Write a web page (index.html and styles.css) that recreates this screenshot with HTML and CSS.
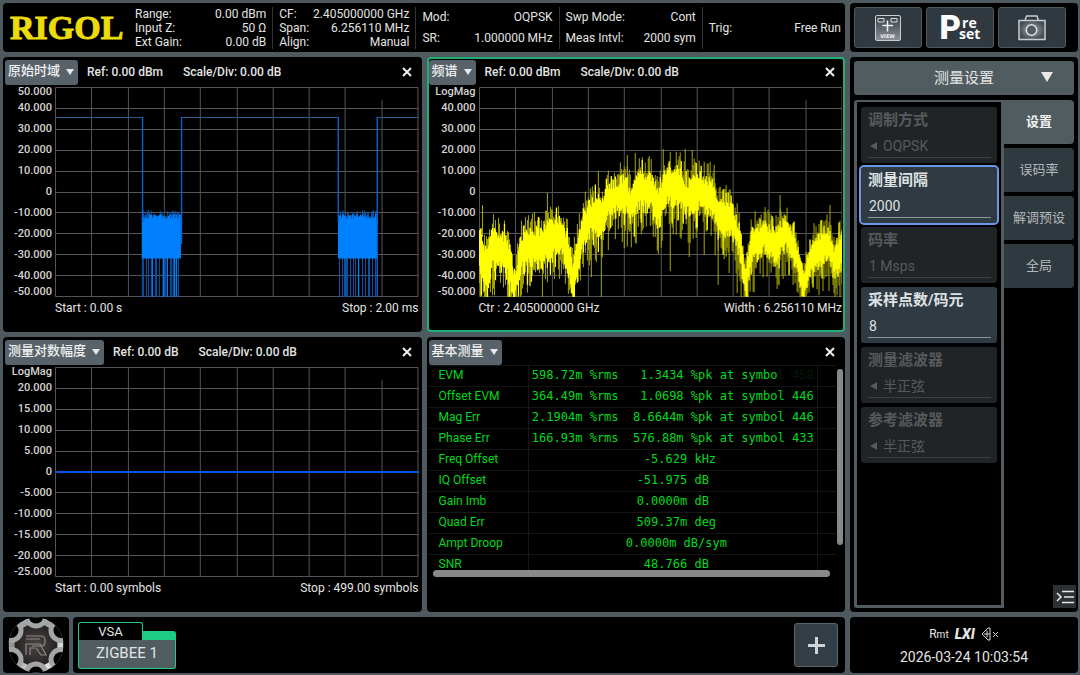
FILE: index.html
```html
<!DOCTYPE html>
<html lang="zh-CN">
<head>
<meta charset="utf-8">
<title>RIGOL VSA</title>
<link rel="stylesheet" href="styles.css">
</head>
<body>
<div class="screen">
  <header class="status">
    <div class="brand">RIGOL</div>
    <div class="cell">
      <div class="pair"><span>Range:</span><span>0.00 dBm</span></div>
      <div class="pair"><span>Input Z:</span><span>50 Ω</span></div>
      <div class="pair"><span>Ext Gain:</span><span>0.00 dB</span></div>
    </div>
    <div class="cell">
      <div class="pair"><span>CF:</span><span>2.405000000 GHz</span></div>
      <div class="pair"><span>Span:</span><span>6.256110 MHz</span></div>
      <div class="pair"><span>Align:</span><span>Manual</span></div>
    </div>
    <div class="cell roomy">
      <div class="pair"><span>Mod:</span><span>OQPSK</span></div>
      <div class="pair"><span>SR:</span><span>1.000000 MHz</span></div>
    </div>
    <div class="cell roomy">
      <div class="pair"><span>Swp Mode:</span><span>Cont</span></div>
      <div class="pair"><span>Meas Intvl:</span><span>2000 sym</span></div>
    </div>
    <div class="cell">
      <div class="pair"><span>Trig:</span><span>Free Run</span></div>
    </div>
  </header>

  <nav class="tools" aria-label="工具">
    <button class="tool" type="button" aria-label="View">
      <svg width="26" height="26" viewBox="0 0 26 26" aria-hidden="true">
        <defs><linearGradient id="viewFill" x1="0" y1="0" x2="0" y2="1"><stop offset="0" stop-color="#343c43"/><stop offset="1" stop-color="#8b9096"/></linearGradient></defs>
        <rect x="0.5" y="0.5" width="25" height="25" rx="1.5" fill="url(#viewFill)" stroke="#c9cdd0"/>
        <path d="M3 3.500h6v3.500H3zM16 3.500h6v3.500h-6z" fill="none" stroke="#d8dbdd"/>
        <path d="M12.500 5.500v11M7.500 10.500h10.500" stroke="#f0f1f2" stroke-width="1.500"/>
        <text x="12.500" y="23" class="view-word">VIEW</text>
      </svg>
    </button>
    <button class="tool preset" type="button"><span class="preset-p">P</span><span class="preset-rest"><span>re</span><span>set</span></span></button>
    <button class="tool" type="button" aria-label="截图">
      <svg width="28" height="26" viewBox="0 0 28 26" aria-hidden="true">
        <defs><radialGradient id="camFill"><stop offset="0" stop-color="#a9adb1"/><stop offset="1" stop-color="#454d54"/></radialGradient></defs>
        <path d="M7 5.500 8.500 1h10.500l1.500 4.500" fill="none" stroke="#c9cdd0" stroke-width="1.500"/>
        <rect x="1" y="5.500" width="26" height="19" fill="url(#camFill)" stroke="#c9cdd0" stroke-width="1.500"/>
        <circle cx="13.500" cy="15" r="5.200" fill="#535a60" stroke="#dfe1e3" stroke-width="1.500"/>
      </svg>
    </button>
  </nav>

  <main class="windows">
    <section class="window">
      <div class="window-head">
        <button class="trace-pick" type="button">原始时域<span class="caret"></span></button>
        <span>Ref: 0.00 dBm</span><span>Scale/Div: 0.00 dB</span>
        <button class="close" type="button" aria-label="关闭"><svg width="10" height="10" viewBox="0 0 10 10"><path d="M1 1l8 8M9 1L1 9"/></svg></button>
      </div>
      <div class="chart">
        <div class="axis"><span>50.000</span><span>40.000</span><span>30.000</span><span>20.000</span><span>10.000</span><span>0</span><span>-10.000</span><span>-20.000</span><span>-30.000</span><span>-40.000</span><span>-50.000</span></div>
        <svg class="plot" data-trace="time" viewBox="0 0 364 210" preserveAspectRatio="none"></svg>
      </div>
      <div class="range"><span>Start : 0.00 s</span><span>Stop : 2.00 ms</span></div>
    </section>

    <section class="window active">
      <div class="window-head">
        <button class="trace-pick" type="button">频谱<span class="caret"></span></button>
        <span>Ref: 0.00 dBm</span><span>Scale/Div: 0.00 dB</span>
        <button class="close" type="button" aria-label="关闭"><svg width="10" height="10" viewBox="0 0 10 10"><path d="M1 1l8 8M9 1L1 9"/></svg></button>
      </div>
      <div class="chart">
        <div class="axis"><span>LogMag</span><span>40.000</span><span>30.000</span><span>20.000</span><span>10.000</span><span>0</span><span>-10.000</span><span>-20.000</span><span>-30.000</span><span>-40.000</span><span>-50.000</span></div>
        <svg class="plot" data-trace="spectrum" viewBox="0 0 364 210" preserveAspectRatio="none"></svg>
      </div>
      <div class="range"><span>Ctr : 2.405000000 GHz</span><span>Width : 6.256110 MHz</span></div>
    </section>

    <section class="window">
      <div class="window-head">
        <button class="trace-pick" type="button">测量对数幅度<span class="caret"></span></button>
        <span>Ref: 0.00 dB</span><span>Scale/Div: 0.00 dB</span>
        <button class="close" type="button" aria-label="关闭"><svg width="10" height="10" viewBox="0 0 10 10"><path d="M1 1l8 8M9 1L1 9"/></svg></button>
      </div>
      <div class="chart">
        <div class="axis"><span>LogMag</span><span>20.000</span><span>15.000</span><span>10.000</span><span>5.000</span><span>0</span><span>-5.000</span><span>-10.000</span><span>-15.000</span><span>-20.000</span><span>-25.000</span></div>
        <svg class="plot" data-trace="flat" viewBox="0 0 364 210" preserveAspectRatio="none"></svg>
      </div>
      <div class="range"><span>Start : 0.00 symbols</span><span>Stop : 499.00 symbols</span></div>
    </section>

    <section class="window">
      <div class="window-head short">
        <button class="trace-pick" type="button">基本测量<span class="caret"></span></button>
        <button class="close" type="button" aria-label="关闭"><svg width="10" height="10" viewBox="0 0 10 10"><path d="M1 1l8 8M9 1L1 9"/></svg></button>
      </div>
      <div class="results">
        <div class="results-view">
          <table class="metrics">
            <tbody>
              <tr><th scope="row">EVM</th><td>598.72m %rms   1.3434 %pk at symbo<span class="faded">l 458</span></td><td></td></tr>
              <tr><th scope="row">Offset EVM</th><td>364.49m %rms   1.0698 %pk at symbol 446</td><td></td></tr>
              <tr><th scope="row">Mag Err</th><td>2.1904m %rms  8.6644m %pk at symbol 446</td><td></td></tr>
              <tr><th scope="row">Phase Err</th><td>166.93m %rms  576.88m %pk at symbol 433</td><td></td></tr>
              <tr><th scope="row">Freq Offset</th><td>  -5.629 kHz</td><td></td></tr>
              <tr><th scope="row">IQ Offset</th><td>-51.975 dB</td><td></td></tr>
              <tr><th scope="row">Gain Imb</th><td>0.0000m dB</td><td></td></tr>
              <tr><th scope="row">Quad Err</th><td> 509.37m deg</td><td></td></tr>
              <tr><th scope="row">Ampt Droop</th><td> 0.0000m dB/sym</td><td></td></tr>
              <tr><th scope="row">SNR</th><td> 48.766 dB</td><td></td></tr>
            </tbody>
          </table>
        </div>
        <div class="bar-v"></div>
        <div class="bar-h"></div>
      </div>
    </section>
  </main>

  <aside class="menu">
    <button class="menu-title" type="button"><span>测量设置</span><span class="caret big"></span></button>
    <div class="menu-body">
      <form class="fields">
        <div class="field off"><label for="mod">调制方式</label><div class="value"><span class="back"></span><select id="mod" disabled><option>OQPSK</option></select></div></div>
        <div class="field on focus"><label for="interval">测量间隔</label><div class="value"><input id="interval" type="text" value="2000"></div></div>
        <div class="field off"><label for="rate">码率</label><div class="value"><input id="rate" type="text" value="1 Msps" disabled></div></div>
        <div class="field on"><label for="points">采样点数/码元</label><div class="value"><input id="points" type="text" value="8"></div></div>
        <div class="field off"><label for="mfilter">测量滤波器</label><div class="value"><span class="back"></span><select id="mfilter" disabled><option>半正弦</option></select></div></div>
        <div class="field off"><label for="rfilter">参考滤波器</label><div class="value"><span class="back"></span><select id="rfilter" disabled><option>半正弦</option></select></div></div>
      </form>
      <div class="tabs">
        <button class="tab current" type="button">设置</button>
        <button class="tab" type="button">误码率</button>
        <button class="tab" type="button">解调预设</button>
        <button class="tab" type="button">全局</button>
        <button class="collapse" type="button" aria-label="收起">
          <svg width="18" height="14" viewBox="0 0 18 14"><path d="M1 3l4 4-4 4M6 1.500h12M8 7h10M6 12.500h12"/></svg>
        </button>
      </div>
    </div>
  </aside>

  <footer class="dock">
    <button class="home" type="button" aria-label="主页">
      <svg width="56" height="56" viewBox="0 0 56 56" aria-hidden="true">
        <defs>
          <linearGradient id="metal" x1="0" y1="0" x2="1" y2="1"><stop offset="0" stop-color="#c9cacb"/><stop offset="0.300" stop-color="#8f9092"/><stop offset="0.550" stop-color="#b9babb"/><stop offset="0.800" stop-color="#e2e2e3"/><stop offset="1" stop-color="#88898b"/></linearGradient>
          <radialGradient id="core"><stop offset="0" stop-color="#4a4544"/><stop offset="1" stop-color="#262323"/></radialGradient>
          <clipPath id="disc"><circle cx="28" cy="28" r="27.500"/></clipPath>
        </defs>
        <g clip-path="url(#disc)">
          <circle cx="28" cy="28" r="27.500" fill="url(#metal)"/>
          <circle cx="28" cy="28" r="21.500" fill="url(#core)"/>
          <g fill="#a4a5a7"><circle cx="28" cy="-1" r="12.500"/><circle cx="53" cy="13.500" r="12.500"/><circle cx="53" cy="42.500" r="12.500"/><circle cx="28" cy="57" r="12.500"/><circle cx="3" cy="42.500" r="12.500"/><circle cx="3" cy="13.500" r="12.500"/></g>
          <g fill="#000"><circle cx="28" cy="-1" r="7.500"/><circle cx="53" cy="13.500" r="7.500"/><circle cx="53" cy="42.500" r="7.500"/><circle cx="28" cy="57" r="7.500"/><circle cx="3" cy="42.500" r="7.500"/><circle cx="3" cy="13.500" r="7.500"/></g>
        </g>
        <path d="M18 19h15q4 0 4 4v2q0 4-4 4h-9M18 22h14M18 38V27h14l6 11h-5l-5-7M22 38v-7h5" fill="none" stroke="#8d8987" stroke-width="1.200"/>
      </svg>
    </button>
    <div class="modes">
      <button class="mode" type="button"><span class="mode-kind">VSA</span><span class="mode-notch"></span><span class="mode-name">ZIGBEE 1</span></button>
      <button class="add" type="button" aria-label="添加"><svg width="17" height="17" viewBox="0 0 17 17"><path d="M8.500 0v17M0 8.500h17"/></svg></button>
    </div>
  </footer>

  <div class="clock">
    <div class="flags">
      <span class="rmt">R<small>mt</small></span>
      <span class="lxi">LXI</span>
      <svg width="18" height="14" viewBox="0 0 18 14" aria-hidden="true"><path d="M1 7l6-6h2v12H7zM3 7h6M6 3.500v7M12 5l5 5M17 5l-5 5"/></svg>
    </div>
    <time datetime="2026-03-24T10:03:54">2026-03-24 10:03:54</time>
  </div>
</div>
<script src="plots.js"></script>
</body>
</html>
```

FILE: styles.css
```css
* { box-sizing: border-box; }

body {
  margin: 0;
  background: #4e5a5f;
  color: #e4e4e4;
  font: 12px/14px Roboto, "Noto Sans CJK SC", sans-serif;
}

button, input, select {
  margin: 0;
  padding: 0;
  border: 0;
  background: none;
  color: inherit;
  font: inherit;
}

.screen {
  display: grid;
  grid-template: 49px minmax(0, 1fr) 56px / minmax(0, 1fr) 228px;
  column-gap: 5px;
  row-gap: 5px;
  height: 100vh;
  padding: 3px 2px 2px 3px;
}

.status, .tools, .window, .menu, .home, .modes, .clock {
  background: #000;
  border-radius: 4px;
}

/* Status strip */
.status {
  display: grid;
  grid-template-columns: 126px repeat(5, 1fr);
  align-items: center;
}

.brand {
  padding-left: 7px;
  color: #ecdc0c;
  font: bold 34px/46px "Liberation Serif", serif;
  -webkit-text-stroke: 1px #ecdc0c;
}

.cell {
  display: flex;
  flex-direction: column;
  justify-content: center;
  height: 42px;
  padding: 0 6px;
}

.cell + .cell { border-left: 1px solid #333; }
.cell:last-child { padding-right: 4px; }
.pair { display: flex; justify-content: space-between; white-space: nowrap; }
.roomy { line-height: 21px; }

/* Tool buttons */
.tools {
  display: grid;
  grid-template-columns: repeat(3, 1fr);
  gap: 4px;
  padding: 4px 12px 4px 4px;
}

.tool {
  display: flex;
  align-items: center;
  justify-content: center;
  border: 1px solid #50595f;
  border-radius: 3px;
  background: #303940;
}

.view-word { fill: #f0f1f2; font: bold 5px "DejaVu Sans", sans-serif; text-anchor: middle; }
.preset { color: #fff; }
.preset-p { font: 900 33px/34px Roboto, sans-serif; }
.preset-rest { display: grid; margin-left: -2px; font: bold 14px/11px "Open Sans", sans-serif; text-align: left; }
.preset-rest span:first-child { padding-left: 3px; }

/* Measurement windows */
.windows {
  display: grid;
  grid-template: repeat(2, minmax(0, 1fr)) / repeat(2, minmax(0, 1fr));
  gap: 5px;
}

.window {
  display: flex;
  flex-direction: column;
  min-height: 0;
  border: 2px solid #000;
}

.active { border-color: #1fae74; }

.window-head {
  display: flex;
  align-items: center;
  flex: none;
  gap: 20px;
  height: 28px;
  padding: 0 8px 2px 0;
  font-weight: 500;
}

.window-head.short { height: 26px; padding-bottom: 0; }

.trace-pick {
  display: flex;
  align-items: center;
  gap: 6px;
  height: 25px;
  margin-right: -11px;
  padding: 0 4px 2px 3px;
  border-radius: 3px;
  background: #57626a;
  color: #f0f0f0;
  font-size: 13px;
}

.caret {
  border: 4px solid transparent;
  border-top: 6px solid #e8e8e8;
  border-bottom: 0;
  margin-top: 2px;
}

.close { margin-left: auto; display: flex; }
.close path { stroke: #f0f0f0; stroke-width: 2; fill: none; }

.chart {
  display: grid;
  grid-template: minmax(0, 1fr) / 50px minmax(0, 1fr);
  flex: 1;
  min-height: 0;
  padding-right: 1px;
}

.axis {
  display: grid;
  grid-template-rows: minmax(0, 1fr) repeat(9, minmax(0, 2fr)) minmax(0, 1fr);
  align-items: center;
  padding-right: 3px;
  color: #d4d4d4;
  font-size: 11px;
  font-weight: 500;
  line-height: 10px;
  text-align: right;
}

.plot { display: block; width: 100%; height: 100%; overflow: hidden; }
.grid-line { stroke: #56565a; stroke-width: 1; fill: none; vector-effect: non-scaling-stroke; }
.time-level { stroke: #2a5b92; fill: none; }
.time-edge { stroke: #0a62cf; stroke-width: 1.4; fill: none; }
.time-dim { stroke: #0b58b0; fill: none; }
.time-core { stroke: #0080ff; stroke-width: 1.2; fill: none; }
.spec-dim { stroke: #a8a800; stroke-width: 1; fill: none; }
.spec-core { stroke: #ffff00; stroke-width: 1.3; fill: none; }
.flat-line { stroke: #0556e8; stroke-width: 2; fill: none; }

.range {
  display: flex;
  justify-content: space-between;
  flex: none;
  height: 33px;
  padding: 4px 1px 0 50px;
}

/* Result table */
.results {
  display: grid;
  grid-template: minmax(0, 1fr) 7px / minmax(0, 1fr) 6px;
  column-gap: 1px;
  flex: 1;
  min-height: 0;
  padding: 0 0 33px;
}

.results-view { overflow: hidden; }
.metrics { width: 100%; border-collapse: collapse; color: #00da1c; table-layout: fixed; }
.metrics tr { height: 21px; border-top: 1px solid #161616; }
.metrics th, .metrics td { padding: 0 0 2px; border-right: 1px solid #161616; }
.metrics th { width: 100px; padding-left: 10px; font-weight: 400; text-align: left; }
.metrics td { font: 12px/14px "DejaVu Sans Mono", monospace; text-align: center; white-space: pre; }
.metrics td:last-child { width: 19px; border: 0; }
.faded { color: #031a06; }
.bar-v { height: 176px; margin-top: 4px; border-radius: 3px; background: #888; }
.bar-h { margin: 0 6px 0 4px; border-radius: 4px; background: #888; }

/* Settings menu */
.menu {
  display: flex;
  flex-direction: column;
  gap: 5px;
  padding: 4px;
}

.menu-title {
  display: grid;
  grid-template-columns: 1fr auto 1fr;
  align-items: center;
  flex: none;
  height: 34px;
  border-radius: 3px;
  background: #505c60;
  font-size: 15px;
}

.menu-title span:first-child { grid-column: 2; }
.caret.big { justify-self: end; margin: 0 21px 2px 0; border-width: 10px 6px 0; }

.menu-body { display: flex; flex: 1; min-height: 0; }

.fields {
  display: flex;
  flex-direction: column;
  gap: 4px;
  flex: 1;
  min-width: 0;
  padding: 5px 4px 0;
  border: 3px solid #505c60;
  border-top-width: 2px;
  border-radius: 3px 0 0 3px;
}

.field {
  display: flex;
  flex-direction: column;
  height: 56px;
  padding: 4px 6px 5px 7px;
  border-radius: 3px;
}

.field label { font-size: 15px; line-height: 18px; font-weight: 700; }
.field.off { background: #212426; color: #565a5c; }
.field.on { background: #303a42; color: #dfe2e4; }
.field.focus { outline: 2px solid #6c97e8; }

.value {
  display: flex;
  align-items: center;
  flex: 1;
  padding-top: 5px;
  border-bottom: 1px solid currentColor;
  font-size: 14px;
}

.off .value { border-color: #3c4042; }
.on .value { border-color: #8d9499; }
.value input, .value select {
  flex: 1;
  min-width: 0;
  height: 22px;
  padding-left: 1px;
  opacity: 1;
  outline: none;
  appearance: none;
}

.back { margin: 0 5px 0 2px; border: 4px solid transparent; border-left: 0; border-right: 7px solid #565a5c; }

.tabs {
  display: flex;
  flex-direction: column;
  flex: none;
  gap: 4px;
  width: 70px;
}

.tab {
  height: 44px;
  border-radius: 0 4px 4px 0;
  background: #2f3940;
  color: #b4b8bb;
  font-size: 13px;
}

.tab.current { background: #505c60; color: #f0f0f0; font-weight: 700; }

.collapse {
  display: flex;
  align-items: center;
  justify-content: center;
  width: 23px;
  height: 23px;
  margin: auto -2px 0 auto;
  background: #2b3033;
}

.collapse path { stroke: #e8e8e8; stroke-width: 1.5; fill: none; }

/* Dock */
.dock { display: flex; gap: 4px; }
.home { display: flex; align-items: center; justify-content: center; width: 66px; }

.modes {
  display: flex;
  align-items: center;
  justify-content: space-between;
  flex: 1;
  padding: 0 7px 0 5px;
}

.mode {
  display: grid;
  grid-template: 18px 29px / 65px 33px;
  align-items: end;
}

.mode-kind {
  height: 18px;
  border: 1px solid #25c884;
  border-bottom: 0;
  border-radius: 3px 3px 0 0;
  font-size: 13px;
  line-height: 18px;
}

.mode-notch { height: 9px; border-radius: 0 3px 0 0; background: #1fcb84; }

.mode-name {
  grid-column: 1 / 3;
  height: 29px;
  border: 1px solid #25c884;
  border-top: 0;
  border-radius: 0 0 3px 3px;
  background: #505c60;
  font-size: 15px;
  line-height: 27px;
}

.add {
  display: flex;
  align-items: center;
  justify-content: center;
  width: 44px;
  height: 44px;
  border: 1px solid #5b666b;
  border-radius: 3px;
  background: #333d45;
}

.add path { stroke: #d0d3d5; stroke-width: 3; }

.clock {
  display: flex;
  flex-direction: column;
  align-items: center;
  justify-content: center;
  gap: 6px;
  font-size: 14px;
  line-height: 16px;
}

.flags { display: flex; align-items: center; gap: 6px; }
.flags small { font-size: 10px; }
.rmt { font-size: 12px; }
.lxi { font-weight: 900; font-style: italic; }
.flags path { stroke: #d8d8d8; fill: none; }
```

FILE: plots.js
```javascript
const NS = "http://www.w3.org/2000/svg";

let seed = 20260324;
function rand() {
  seed = (seed * 1664525 + 1013904223) % 4294967296;
  return seed / 4294967296;
}

function add(svg, cls, d) {
  const path = document.createElementNS(NS, "path");
  path.setAttribute("class", cls);
  path.setAttribute("d", d);
  svg.appendChild(path);
}

function drawGrid(svg) {
  let d = "M.5 .5H363.5V209.500H.5Z";
  for (let i = 1; i < 10; i++) {
    const x = Math.round(i * 36.3) + 0.5;
    const y = Math.round(i * 20.9) + 0.5;
    d += `M${x} ${i === 9 ? 13 : 0}V210M0 ${y}H364`;
  }
  add(svg, "grid-line", d);
}

function drawTime(svg) {
  add(svg, "time-level", "M0 30.5H88M127 30.5H284M323 30.5H364");
  let core = "", dim = "";
  for (const start of [87.5, 284]) {
    for (let x = start; x <= start + 38.5; x += 1) {
      core += `M${x} ${127 + rand() * 5}V171.5`;
      dim += `M${x} ${123 + rand() * 8}V132`;
      if (rand() < 0.42) dim += `M${x} 170V210`;
      if (rand() < 0.1) core += `M${x} 170V210`;
    }
  }
  add(svg, "time-dim", dim);
  add(svg, "time-core", core);
  add(svg, "time-edge", "M87.700 30V135M126.700 30V157M283.700 30V135M322.700 30V210");
}

/* x, top and bottom of the dense part of the spectrum */
const ENVELOPE = [
  [0, 144, 179], [8, 169, 206], [13, 146, 176], [25, 151, 179], [31, 163, 193],
  [36, 193, 210], [41, 156, 183], [53, 144, 173], [63, 148, 176], [70, 133, 166],
  [83, 136, 163], [90, 159, 189], [94, 179, 210], [100, 149, 179], [105, 126, 156],
  [113, 116, 143], [123, 116, 146], [128, 104, 129], [140, 96, 123], [146, 93, 121],
  [152, 106, 133], [160, 89, 118], [173, 91, 121], [180, 109, 139], [186, 88, 114],
  [200, 84, 113], [208, 101, 126], [213, 93, 119], [223, 93, 118], [233, 96, 123],
  [240, 116, 146], [253, 123, 143], [261, 143, 166], [267, 186, 210], [273, 146, 173],
  [286, 139, 163], [296, 146, 173], [306, 134, 159], [316, 149, 173], [325, 186, 210],
  [335, 153, 179], [350, 144, 169], [356, 163, 189], [364, 146, 176]
];

const SPIKES = [
  [3, 118, 150], [68, 106, 140], [119, 84, 120], [148, 68, 100], [156, 66, 100],
  [184, 62, 100], [206, 62, 100], [213, 63, 100], [235, 78, 110], [301, 108, 140],
  [351, 118, 150], [122, 130, 210], [191, 110, 184], [239, 130, 198], [145, 115, 161],
  [179, 130, 167], [210, 115, 170], [225, 115, 168], [250, 130, 186], [258, 150, 206],
  [117, 130, 175], [112, 130, 190], [245, 130, 172]
];

function drawSpectrum(svg) {
  let core = "", dim = "", k = 0;
  for (let x = 0.5; x < 364; x += 1) {
    while (k < ENVELOPE.length - 2 && ENVELOPE[k + 1][0] < x) k++;
    const [x0, t0, b0] = ENVELOPE[k];
    const [x1, t1, b1] = ENVELOPE[k + 1];
    const f = (x - x0) / (x1 - x0);
    const top = t0 + (t1 - t0) * f;
    const bottom = b0 + (b1 - b0) * f;
    core += `M${x} ${top - 7 + rand() * 11}V${bottom - 6 + rand() * 14}`;
    dim += `M${x} ${top - Math.pow(rand(), 1.5) * 22}V${bottom + Math.pow(rand(), 1.5) * 36}`;
    if (rand() < 0.18) core += `M${x} ${top - rand() * 18}V${bottom}`;
    if (rand() < 0.18) core += `M${x} ${top}V${bottom + rand() * 24}`;
  }
  for (const [x, a, b] of SPIKES) dim += `M${x + 0.5} ${a}V${b}`;
  add(svg, "spec-dim", dim);
  add(svg, "spec-core", core);
}

for (const svg of document.querySelectorAll(".plot")) {
  drawGrid(svg);
  const kind = svg.dataset.trace;
  if (kind === "time") drawTime(svg);
  if (kind === "spectrum") drawSpectrum(svg);
  if (kind === "flat") add(svg, "flat-line", "M0 105H364");
}
```
